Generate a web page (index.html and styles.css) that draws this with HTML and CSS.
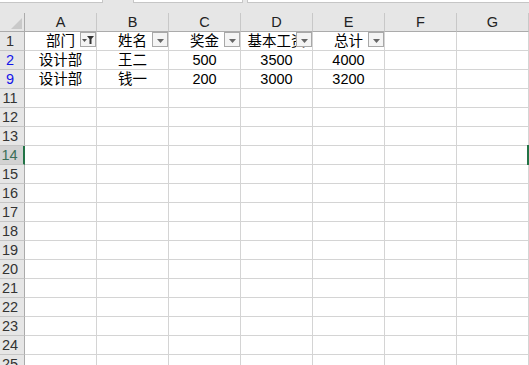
FILE: index.html
```html
<!DOCTYPE html>
<html lang="zh-CN">
<head>
    <meta charset="UTF-8">
    <title>筛选 - 工作表</title>
    <link rel="stylesheet" href="styles.css">
</head>
<body>
    <div class="topbar">
        <div class="box box1"></div>
        <div class="box box2"></div>
        <div class="box box3"></div>
    </div>
    <table class="sheet">
        <tr class="colhead">
            <th class="corner"></th>
            <th>A</th><th>B</th><th>C</th><th>D</th><th>E</th><th>F</th><th>G</th><th class="active"></th>
        </tr>
        <tr>
            <td class="rh">1</td>
            <td class="title">部门<span class="fbtn"><svg width="13" height="9" viewBox="0 0 13 9"><polygon points="0,3 5,3 2.5,6" fill="#555"/><polygon points="5,0 12,0 9.5,3 9.5,8 7.5,8 7.5,3" fill="#333"/></svg></span></td>
            <td class="title">姓名<span class="fbtn"><svg width="7" height="4" viewBox="0 0 7 4"><polygon points="0,0 7,0 3.5,4" fill="#666"/></svg></span></td>
            <td class="title">奖金<span class="fbtn"><svg width="7" height="4" viewBox="0 0 7 4"><polygon points="0,0 7,0 3.5,4" fill="#666"/></svg></span></td>
            <td class="title">基本工资<span class="fbtn"><svg width="7" height="4" viewBox="0 0 7 4"><polygon points="0,0 7,0 3.5,4" fill="#666"/></svg></span></td>
            <td class="title">总计<span class="fbtn"><svg width="7" height="4" viewBox="0 0 7 4"><polygon points="0,0 7,0 3.5,4" fill="#666"/></svg></span></td>
            <td></td><td></td><td></td>
        </tr>
        <tr>
            <td class="rh filtered">2</td>
            <td>设计部</td><td>王二</td><td>500</td><td>3500</td><td>4000</td><td></td><td></td><td></td>
        </tr>
        <tr>
            <td class="rh filtered">9</td>
            <td>设计部</td><td>钱一</td><td>200</td><td>3000</td><td>3200</td><td></td><td></td><td></td>
        </tr>
        <tr><td class="rh">11</td><td></td><td></td><td></td><td></td><td></td><td></td><td></td><td></td></tr>
        <tr><td class="rh">12</td><td></td><td></td><td></td><td></td><td></td><td></td><td></td><td></td></tr>
        <tr><td class="rh">13</td><td></td><td></td><td></td><td></td><td></td><td></td><td></td><td></td></tr>
        <tr><td class="rh active">14</td><td></td><td></td><td></td><td></td><td></td><td></td><td></td><td class="selected"><div class="selbox"></div></td></tr>
        <tr><td class="rh">15</td><td></td><td></td><td></td><td></td><td></td><td></td><td></td><td></td></tr>
        <tr><td class="rh">16</td><td></td><td></td><td></td><td></td><td></td><td></td><td></td><td></td></tr>
        <tr><td class="rh">17</td><td></td><td></td><td></td><td></td><td></td><td></td><td></td><td></td></tr>
        <tr><td class="rh">18</td><td></td><td></td><td></td><td></td><td></td><td></td><td></td><td></td></tr>
        <tr><td class="rh">19</td><td></td><td></td><td></td><td></td><td></td><td></td><td></td><td></td></tr>
        <tr><td class="rh">20</td><td></td><td></td><td></td><td></td><td></td><td></td><td></td><td></td></tr>
        <tr><td class="rh">21</td><td></td><td></td><td></td><td></td><td></td><td></td><td></td><td></td></tr>
        <tr><td class="rh">22</td><td></td><td></td><td></td><td></td><td></td><td></td><td></td><td></td></tr>
        <tr><td class="rh">23</td><td></td><td></td><td></td><td></td><td></td><td></td><td></td><td></td></tr>
        <tr><td class="rh">24</td><td></td><td></td><td></td><td></td><td></td><td></td><td></td><td></td></tr>
        <tr><td class="rh">25</td><td></td><td></td><td></td><td></td><td></td><td></td><td></td><td></td></tr>
    </table>
</body>
</html>
```

FILE: styles.css
```css
body {
    margin: 0;
    width: 529px;
    height: 365px;
    overflow: hidden;
    background-color: #fff;
    font-family: "Liberation Sans", "Noto Sans CJK SC", sans-serif;
    font-size: 14.5px;
    color: #000;
}
.topbar {
    height: 13px;
    display: flex;
    align-items: flex-start;
    background-color: #e6e6e6;
}
.box {
    height: 2px;
    background-color: #fff;
    border-bottom: 1px solid #c6c6c6;
    border-right: 1px solid #c6c6c6;
}
.box1 {
    width: 102px;
    margin-right: 30px;
}
.box2 {
    width: 108px;
    border-left: 1px solid #c6c6c6;
    margin-right: 4px;
}
.box3 {
    flex: 1;
    border-left: 1px solid #c6c6c6;
    border-right: none;
}
.sheet {
    border-collapse: separate;
    border-spacing: 0;
    table-layout: fixed;
    width: 601px;
}
.sheet th, .sheet td {
    box-sizing: border-box;
    width: 72px;
    height: 19px;
    padding: 1px 0 0 0;
    line-height: 17px;
    border-right: 1px solid #d4d4d4;
    border-bottom: 1px solid #d4d4d4;
    text-align: center;
    font-weight: normal;
    white-space: nowrap;
    overflow: hidden;
}
.colhead th {
    background-color: #e6e6e6;
    color: #222;
    border-right: 1px solid #c8c8c8;
    border-bottom: 1px solid #ababab;
}
.colhead th.active {
    background-color: #d2d2d2;
    border-bottom: 2px solid #217346;
}
.sheet th.corner {
    width: 25px;
    position: relative;
    border-right: 1px solid #ababab;
}
.corner::after {
    content: "";
    position: absolute;
    right: 2px;
    bottom: 2px;
    border-left: 11px solid transparent;
    border-bottom: 11px solid #c9c9c9;
}
.sheet td.rh {
    width: 25px;
    padding-right: 4px;
    background-color: #e6e6e6;
    color: #333;
    border-right: 1px solid #ababab;
    border-bottom: 1px solid #c6c6c6;
}
.sheet td.rh.filtered {
    color: #1515e8;
}
.sheet td.rh.active {
    background-color: #d2d2d2;
    color: #3b6f58;
    border-right: 2px solid #217346;
}
.sheet td.title {
    position: relative;
}
.fbtn {
    position: absolute;
    top: 0;
    right: 0;
    width: 16px;
    height: 15px;
    box-sizing: border-box;
    border: 1px solid #a8a8a8;
    background-color: #f4f4f4;
    display: flex;
    align-items: center;
    justify-content: center;
    padding-top: 2px;
}
.sheet td.selected {
    position: relative;
    overflow: visible;
}
.selbox {
    position: absolute;
    left: -2px;
    top: -1px;
    width: 74px;
    height: 20px;
    box-sizing: border-box;
    border: 2px solid #217346;
}
```
